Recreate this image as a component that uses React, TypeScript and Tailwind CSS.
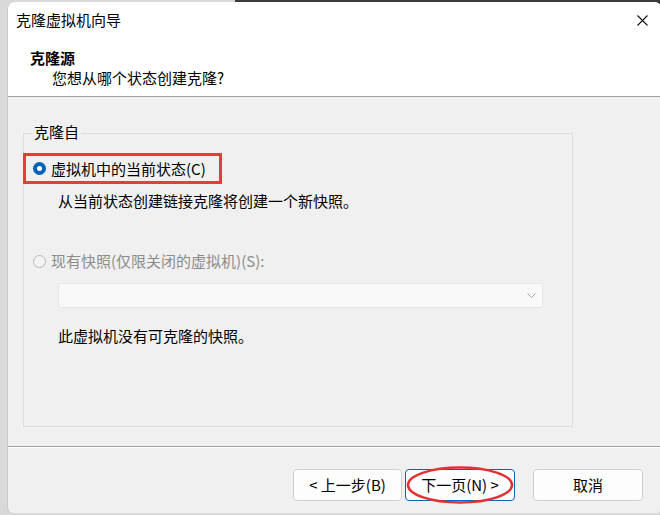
import React from "react";

const font = { fontFamily: '"Noto Sans CJK SC", "Noto Sans", sans-serif' };

export default function App() {
  return (
    <div
      className="relative w-[660px] h-[515px] overflow-hidden bg-[#d9d9d9] text-[15px] text-black"
      style={font}
    >
      <div className="absolute top-0 left-[235px] right-0 h-[4px] bg-[#3b3b3b]" />
      <div className="relative ml-[7px] mt-[2px] w-[655px] h-[511px] rounded-t-[8px] rounded-b-[6px] bg-[#f0f0f0] flex flex-col overflow-hidden border-l border-[#c8c8c8]">
        {/* header */}
        <div className="bg-white h-[95px] border-b border-[#a0a0a0] flex flex-col">
          <div className="h-[36px] flex items-center justify-between pl-[8px] pr-[14px]">
            <span className="leading-[20px]">克隆虚拟机向导</span>
            <svg width="11" height="11" viewBox="0 0 11 11">
              <path d="M0.5 0.5 L10.5 10.5 M10.5 0.5 L0.5 10.5" stroke="#111" strokeWidth="1.1" />
            </svg>
          </div>
          <div className="pl-[22px] pt-[10px] font-bold leading-[20px]">克隆源</div>
          <div className="pl-[44px] leading-[20px] pt-[0px]">您想从哪个状态创建克隆?</div>
        </div>

        {/* body */}
        <div className="flex-1 pt-[36px] pl-[15px] pr-[89px]">
          <div className="relative border border-[#dcdcdc] h-[294px] pt-[19px]">
            <div className="absolute -top-[12px] left-[8px] px-[2px] bg-[#f0f0f0] leading-[20px]">克隆自</div>
            <div className="w-[199px] h-[31px] border-[3px] border-[#ea3b3b] flex items-center pl-[7px] gap-[5px] -ml-[1px]">
              <span className="w-[13px] h-[13px] rounded-full bg-[#0062b8] flex items-center justify-center">
                <span className="w-[5px] h-[5px] rounded-full bg-white" />
              </span>
              <span className="leading-[20px]">虚拟机中的当前状态(C)</span>
            </div>
            <div className="pl-[34px] pt-[7px] leading-[20px]">从当前状态创建链接克隆将创建一个新快照。</div>
            <div className="flex items-center pl-[9px] gap-[5px] pt-[40px] text-[#8c8c8c]">
              <span className="w-[13px] h-[13px] rounded-full border border-[#b8b8b8] bg-[#f4f4f4]" />
              <span className="leading-[20px]">现有快照(仅限关闭的虚拟机)(S):</span>
            </div>
            <div className="ml-[34px] mt-[12px] w-[485px] h-[25px] bg-[#f9f9f9] border border-[#e6e6e6] rounded-[3px] flex items-center justify-end pr-[6px]">
              <svg width="9" height="5" viewBox="0 0 9 5">
                <path d="M0.5 0.5 L4.5 4.5 L8.5 0.5" fill="none" stroke="#a8a8a8" strokeWidth="1" />
              </svg>
            </div>
            <div className="pl-[34px] pt-[18px] leading-[20px]">此虚拟机没有可克隆的快照。</div>
          </div>
        </div>

        {/* footer */}
        <div className="h-[67px] border-t border-[#a0a0a0] shadow-[inset_0_1px_0_#ffffff] flex items-start justify-end pt-[22px] pr-[19px]">
          <button className="w-[109px] h-[32px] rounded-[4px] border border-[#d0d0d0] bg-[#fdfdfd] leading-[20px]">
            &lt; 上一步(B)
          </button>
          <div className="relative ml-[3px]">
            <button className="w-[110px] h-[32px] rounded-[4px] border border-[#0067c0] bg-[#fdfdfd] leading-[20px]">
              下一页(N) &gt;
            </button>
            <svg className="absolute -top-[4px] left-[1px]" width="110" height="40" viewBox="0 0 110 40">
              <ellipse cx="54" cy="20" rx="52" ry="17.5" fill="none" stroke="#e53030" strokeWidth="2.5" />
            </svg>
          </div>
          <button className="ml-[18px] w-[110px] h-[32px] rounded-[4px] border border-[#d0d0d0] bg-[#fdfdfd] leading-[20px]">
            取消
          </button>
        </div>
      </div>
    </div>
  );
}
